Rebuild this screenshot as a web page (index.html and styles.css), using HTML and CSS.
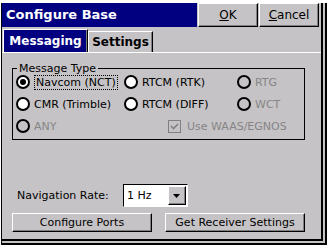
FILE: index.html
```html
<!DOCTYPE html>
<html>
<head>
<meta charset="utf-8">
<link rel="stylesheet" href="styles.css">
</head>
<body>
<div class="frame">
  <div class="dialog">
    <div class="titlebar">
      <div class="title">Configure Base</div>
      <div class="tbtn"><u>O</u>K</div>
      <div class="tbtn"><u>C</u>ancel</div>
    </div>
    <div class="tabs">
      <div class="tab tab-active">Messaging</div>
      <div class="tab">Settings</div>
    </div>
    <div class="panel">
      <fieldset class="group">
        <legend class="group-label">Message Type</legend>
        <div class="opts">
          <div class="opt"><span class="radio checked"></span><span class="focus">Navcom (NCT)</span></div>
          <div class="opt"><span class="radio"></span><span>RTCM (RTK)</span></div>
          <div class="opt disabled"><span class="radio"></span><span>RTG</span></div>
          <div class="opt"><span class="radio"></span><span>CMR (Trimble)</span></div>
          <div class="opt"><span class="radio"></span><span>RTCM (DIFF)</span></div>
          <div class="opt disabled"><span class="radio"></span><span>WCT</span></div>
          <div class="opt disabled"><span class="radio"></span><span>ANY</span></div>
          <div class="opt disabled check-opt"><span class="check"><svg width="11" height="11" viewBox="0 0 11 11"><path d="M2 5 L4.5 7.5 L9 3" fill="none" stroke="#808080" stroke-width="1.6"/></svg></span><span>Use WAAS/EGNOS</span></div>
        </div>
      </fieldset>
      <div class="nav-row">
        <span class="nav-label">Navigation Rate:</span>
        <div class="combo">
          <span class="combo-value">1 Hz</span>
          <span class="combo-btn"><svg width="8" height="4" viewBox="0 0 8 4"><path d="M0 0 H7 L3.5 4 Z" fill="#000"/></svg></span>
        </div>
      </div>
      <div class="btn-row">
        <div class="btn">Configure Ports</div>
        <div class="btn">Get Receiver Settings</div>
      </div>
    </div>
  </div>
</div>
</body>
</html>
```
FILE: styles.css
```css
html, body {
  margin: 0;
  padding: 0;
}
body {
  background: #fff;
  width: 330px;
  height: 249px;
  overflow: hidden;
  font-family: "DejaVu Sans", sans-serif;
  font-size: 11px;
  color: #000;
}
.frame {
  margin: 3px 0 0 1px;
  width: 326px;
  height: 242px;
  box-sizing: border-box;
  background: #c6c3c6;
  border-left: 1px solid #000;
  border-right: 2px solid #000;
  border-bottom: 2px solid #000;
  padding: 0 2px 2px 0;
}
.dialog {
  width: 321px;
  height: 238px;
  box-sizing: border-box;
  border-right: 2px solid #000;
  border-bottom: 2px solid #000;
  display: flex;
  flex-direction: column;
}
.titlebar {
  display: flex;
  height: 24px;
  flex: none;
}
.title {
  width: 195px;
  box-sizing: border-box;
  background: #000080;
  color: #fff;
  font-weight: bold;
  font-size: 13px;
  padding-left: 4px;
  line-height: 24px;
}
.tbtn {
  width: 60px;
  margin-left: 1px;
  box-sizing: border-box;
  border: 1px solid;
  border-color: #fff #000 #000 #fff;
  box-shadow: inset -1px -1px #808080;
  text-align: center;
  line-height: 22px;
  font-size: 12px;
}
.tbtn u {
  text-decoration-thickness: 1px;
}
.tabs {
  display: flex;
  align-items: flex-end;
  margin-top: 2px;
  height: 23px;
  padding-left: 1px;
  border-bottom: 1px solid #fff;
  flex: none;
}
.tab {
  box-sizing: border-box;
  height: 21px;
  width: 65px;
  font-weight: bold;
  font-size: 12px;
  border-top: 1px solid #fff;
  border-left: 1px solid #fff;
  border-right: 1px solid #000;
  box-shadow: inset -1px 0 #808080;
  text-align: center;
  line-height: 20px;
}
.tab-active {
  height: 23px;
  width: 85px;
  background: #000080;
  color: #fff;
  line-height: 22px;
}
.panel {
  flex: 1;
}
.group {
  margin: 9px 0 0 10px;
  width: 293px;
  box-sizing: border-box;
  border: 1px solid #000;
  padding: 0 0 6px 0;
  min-width: 0;
}
.group-label {
  margin-left: 4px;
  padding: 0 2px;
  line-height: 13px;
  font-size: 11px;
}
.opts {
  display: grid;
  grid-template-columns: 108px 113px auto;
  grid-auto-rows: 14px;
  row-gap: 8px;
  margin-left: 3px;
}
.opt {
  display: flex;
  align-items: center;
  gap: 4px;
  height: 14px;
  white-space: nowrap;
}
.radio {
  width: 14px;
  height: 14px;
  box-sizing: border-box;
  border: 2px solid #000;
  border-radius: 50%;
  background: #fff;
  flex: none;
  display: flex;
  align-items: center;
  justify-content: center;
}
.radio.checked::after {
  content: "";
  width: 6px;
  height: 6px;
  border-radius: 50%;
  background: #000;
}
.disabled {
  color: #858585;
}
.disabled .radio {
  background: transparent;
}
.focus {
  border: 1px dotted #000;
  padding: 0 1px;
  line-height: 13px;
}
.check-opt {
  grid-column: 2 / span 2;
  margin-left: 44px;
  gap: 6px;
}
.check {
  width: 13px;
  height: 13px;
  box-sizing: border-box;
  border: 1px solid #808080;
  display: flex;
  align-items: center;
  justify-content: center;
  flex: none;
}
.nav-row {
  display: flex;
  align-items: center;
  margin-top: 44px;
  padding-left: 15px;
  height: 23px;
}
.nav-label {
  width: 106px;
  flex: none;
}
.combo {
  width: 65px;
  height: 23px;
  box-sizing: border-box;
  border: 1px solid;
  border-color: #000 #fff #fff #000;
  background: #fff;
  padding: 1px;
  display: flex;
}
.combo-value {
  flex: 1;
  padding-left: 2px;
  line-height: 19px;
}
.combo-btn {
  width: 18px;
  box-sizing: border-box;
  background: #c6c3c6;
  border: 1px solid;
  border-color: #fff #000 #000 #fff;
  box-shadow: inset -1px -1px #808080;
  display: flex;
  align-items: center;
  justify-content: center;
}
.btn-row {
  display: flex;
  gap: 13px;
  margin-top: 6px;
  padding-left: 10px;
}
.btn {
  width: 140px;
  height: 19px;
  box-sizing: border-box;
  border: 1px solid;
  border-color: #fff #000 #000 #fff;
  box-shadow: inset -1px -1px #808080;
  text-align: center;
  line-height: 17px;
}
```
